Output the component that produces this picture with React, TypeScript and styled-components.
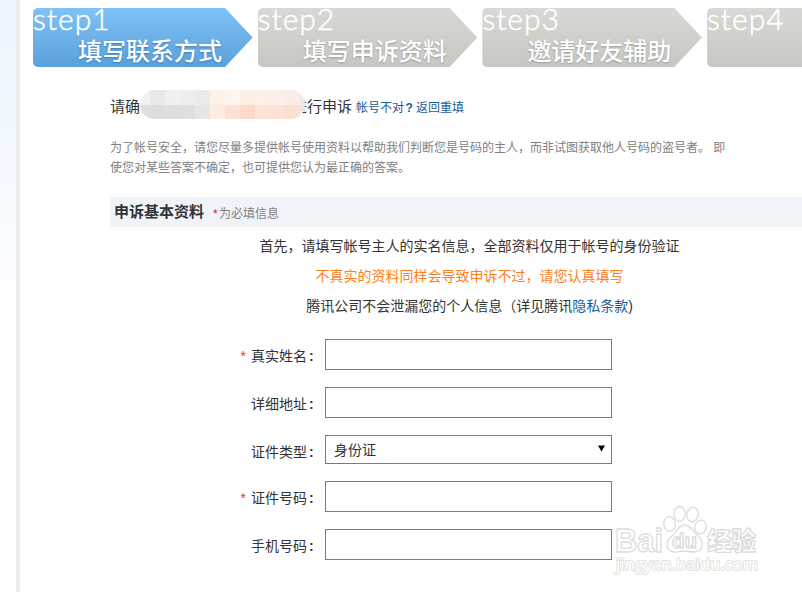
import React from "react";
import styled, { createGlobalStyle } from "styled-components";

const GlobalStyle = createGlobalStyle`
  * { box-sizing: border-box; }
  body {
    margin: 0;
    background: #fff;
    color: #333;
    font-family: "Liberation Sans", "Noto Sans CJK SC", sans-serif;
    font-weight: 400;
    overflow: hidden;
  }
`;

const Page = styled.div`
  position: relative;
  display: flex;
  width: 802px;
  height: 592px;
  overflow: hidden;
`;

const Gutter = styled.div`
  flex: none;
  width: 20px;
  border-right: 4px solid #e9edf0;
  background: linear-gradient(#edf5fe, #f1f7ff 100px, #fff 340px);
`;

const Main = styled.main`
  flex: none;
  width: 782px;
  padding-top: 8px;
`;

const Steps = styled.div`
  display: flex;
  width: 900px;
  padding-left: 13px;
  gap: 5px;
`;

const Step = styled.div<{ $active?: boolean }>`
  flex: none;
  width: 219.7px;
  height: 59px;
  overflow: hidden;
  border-radius: 5px 0 0 5px;
  color: #fff;
  background: ${(p) =>
    p.$active ? "linear-gradient(#80c2f6, #5aa0db)" : "linear-gradient(#d8d9d4, #c8c8c3)"};
  clip-path: polygon(0 0, 192px 0, 100% 50%, 192px 100%, 0 100%);
`;

const StepNumber = styled.div`
  height: 30px;
  margin-top: -5px;
  font: 300 30px/30px Lato, sans-serif;
  letter-spacing: 1px;
  -webkit-text-stroke: 0.5px #fff;
  white-space: nowrap;
`;

const StepName = styled.div<{ $active?: boolean }>`
  padding-left: 45px;
  font: 500 24px/34px "Noto Sans CJK SC", sans-serif;
  white-space: nowrap;
  text-shadow: 0 1px 2px ${(p) => (p.$active ? "#3c7cb4" : "#999")};
`;

const Content = styled.div`
  padding-left: 90px;
`;

const Confirm = styled.div`
  display: flex;
  align-items: baseline;
  height: 24px;
  margin-top: 28px;
  font-size: 15px;
  line-height: 24px;
  white-space: nowrap;
`;

const Account = styled.span`
  position: relative;
  align-self: flex-start;
  width: 137px;
  height: 24px;
`;

const Mosaic = styled.span`
  position: absolute;
  left: -15px;
  top: -5px;
  display: grid;
  grid-template-columns: 10px repeat(10, 15px) 5px;
  grid-template-rows: 15px 14px;
  border-radius: 15px;
  overflow: hidden;
`;

const Tile = styled.i<{ $tone: string }>`
  background: ${(p) => p.$tone};
`;

const Link = styled.a<{ $small?: boolean }>`
  color: #1b5c92;
  ${(p) => (p.$small ? "margin-left: 4px; font-size: 12px;" : "")}
`;

const QuestionMark = styled.b`
  display: inline-block;
  width: 12px;
  padding-right: 2px;
  text-align: center;
`;

const Notice = styled.p`
  width: 625px;
  margin: 19px 0 0;
  color: #808080;
  font-size: 12px;
  line-height: 20px;
  white-space: nowrap;
`;

const SectionBar = styled.div`
  display: flex;
  align-items: center;
  height: 30px;
  margin-top: 19px;
  padding-left: 4px;
  background: #f0f4f8;
`;

const SectionTitle = styled.h2`
  margin: 0 9px 0 0;
  font-size: 15px;
  font-weight: 700;
  line-height: 30px;
`;

const SectionHint = styled.span`
  padding-top: 1px;
  color: #808080;
  font-size: 12px;
`;

const Star = styled.span`
  display: inline-block;
  width: 6px;
  color: #d8182c;
`;

const Intro = styled.div`
  display: flex;
  flex-direction: column;
  align-items: center;
  width: 719px;
  padding-top: 4px;
`;

const IntroLine = styled.p<{ $warn?: boolean }>`
  margin: 0;
  color: ${(p) => (p.$warn ? "#ff7f1c" : "#333")};
  font-size: 14px;
  line-height: 30px;
  white-space: nowrap;
`;

const Form = styled.form`
  display: flex;
  flex-direction: column;
  gap: 17px;
  padding-top: 18px;
`;

const Field = styled.label`
  display: flex;
  align-items: flex-start;
`;

const LabelText = styled.span`
  width: 211px;
  margin-right: 4px;
  padding-top: 5px;
  text-align: right;
  font-size: 14px;
  line-height: 24px;
  white-space: nowrap;
`;

const Required = styled.span`
  margin-right: 5px;
  color: #ff2a4d;
`;

const Colon = styled.span`
  display: inline-block;
  width: 14px;
  padding-left: 2px;
  text-align: left;
  font-weight: 700;
`;

const TextInput = styled.input`
  width: 287px;
  height: 31px;
  padding: 0 8px;
  border: 1px solid #3594b5;
  border-radius: 0;
  outline: none;
  background: #fff;
`;

const SelectBox = styled.span`
  display: flex;
  align-items: center;
  justify-content: space-between;
  width: 287px;
  height: 29px;
  padding: 0 6px 2px 8px;
  border: 1px solid #3594b5;
  font-size: 14px;
`;

const Watermark = styled.svg`
  position: absolute;
  left: 612px;
  top: 502px;
`;

const STEPS = ["填写联系方式", "填写申诉资料", "邀请好友辅助", ""];

const TILES = [
  "#f2f2f2", "#e8e8e8", "#f0f0f0", "#eeeeee", "#ebebeb", "#fdf1e8", "#fef5f0", "#fdefe6", "#fdf0e9", "#fcefeb", "#fbece9", "#eeeaea",
  "#dedede", "#dddddd", "#dedede", "#dfdfdf", "#e6e6e7", "#feece1", "#fde2d3", "#fcdac9", "#fde4d7", "#fde1d3", "#fbdfd3", "#f0e7e4",
];

type FieldSpec = { label: string; required?: boolean; value?: string };

const FIELDS: FieldSpec[] = [
  { label: "真实姓名", required: true },
  { label: "详细地址" },
  { label: "证件类型", value: "身份证" },
  { label: "证件号码", required: true },
  { label: "手机号码" },
];

function FormField({ label, required, value }: FieldSpec) {
  return (
    <Field>
      <LabelText>
        {required && <Required>*</Required>}
        {label}
        <Colon>:</Colon>
      </LabelText>
      {value ? (
        <SelectBox>
          {value}
          <svg width="7" height="7" viewBox="0 0 7 7">
            <path d="M0 .5H7L3.5 6.5Z" fill="#000" />
          </svg>
        </SelectBox>
      ) : (
        <TextInput />
      )}
    </Field>
  );
}

function BaiduMark() {
  return (
    <Watermark width="152" height="78" viewBox="0 0 152 78">
      <g fill="#fff" stroke="#dcdcdc" strokeWidth="1.3" strokeLinejoin="round">
        <text x="3" y="50" fontSize="33" fontFamily="Liberation Sans, sans-serif" fontWeight="700" textLength="48" lengthAdjust="spacingAndGlyphs">Bai</text>
        <ellipse cx="57.5" cy="22" rx="5.7" ry="7.4" transform="rotate(-8 57.5 22)" />
        <ellipse cx="67.500" cy="12" rx="5.5" ry="7.5" />
        <ellipse cx="80.5" cy="12.5" rx="5.6" ry="7.3" transform="rotate(10 80.5 12.5)" />
        <ellipse cx="88.5" cy="25" rx="5.7" ry="7" transform="rotate(12 88.5 25)" />
        <path d="M72.5 23C79 23 81 30 86 34C92 39 92 49 83 50C79 50 76 49 72 49C68 49 66 50.5 62 50C53 49 53 39 60 34C65 30 66 23 72.5 23Z" />
        <text x="60" y="46" fontSize="20" fontFamily="Liberation Sans, sans-serif" fontWeight="700" textLength="25" lengthAdjust="spacingAndGlyphs">du</text>
        <text x="95" y="48" fontSize="25" fontFamily="Noto Sans CJK SC, sans-serif" fontWeight="900" textLength="49" lengthAdjust="spacingAndGlyphs">经验</text>
        <text x="4" y="68" fontSize="16" strokeWidth="2" stroke="#e3e3e3" paintOrder="stroke" fontFamily="Open Sans, sans-serif" textLength="142" lengthAdjust="spacingAndGlyphs">jingyan.baidu.com</text>
      </g>
    </Watermark>
  );
}

export default function App() {
  return (
    <>
      <GlobalStyle />
      <Page>
        <Gutter />
        <Main>
          <Steps>
            {STEPS.map((name, i) => (
              <Step key={i} $active={i === 0}>
                <StepNumber>step{i + 1}</StepNumber>
                <StepName $active={i === 0}>{name}</StepName>
              </Step>
            ))}
          </Steps>
          <Content>
            <Confirm>
              请确认
              <Account>
                <Mosaic>
                  {TILES.map((tone, i) => (
                    <Tile key={i} $tone={tone} />
                  ))}
                </Mosaic>
              </Account>
              进行申诉
              <Link $small>
                帐号不对<QuestionMark>?</QuestionMark>返回重填
              </Link>
            </Confirm>
            <Notice>
              为了帐号安全，请您尽量多提供帐号使用资料以帮助我们判断您是号码的主人，而非试图获取他人号码的盗号者。 即
              <br />
              使您对某些答案不确定，也可提供您认为最正确的答案。
            </Notice>
            <SectionBar>
              <SectionTitle>申诉基本资料</SectionTitle>
              <SectionHint>
                <Star>*</Star>为必填信息
              </SectionHint>
            </SectionBar>
            <Intro>
              <IntroLine>首先，请填写帐号主人的实名信息，全部资料仅用于帐号的身份验证</IntroLine>
              <IntroLine $warn>不真实的资料同样会导致申诉不过，请您认真填写</IntroLine>
              <IntroLine>
                腾讯公司不会泄漏您的个人信息（详见腾讯<Link>隐私条款</Link>)
              </IntroLine>
            </Intro>
            <Form>
              {FIELDS.map((field) => (
                <FormField key={field.label} {...field} />
              ))}
            </Form>
          </Content>
        </Main>
        <BaiduMark />
      </Page>
    </>
  );
}
